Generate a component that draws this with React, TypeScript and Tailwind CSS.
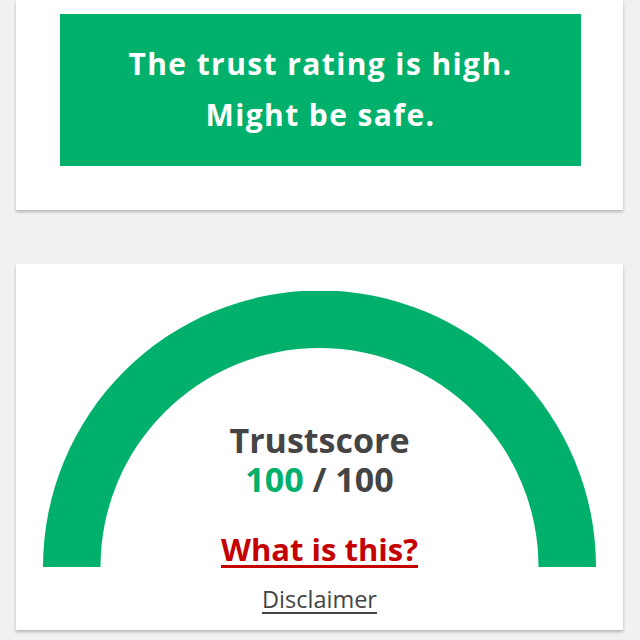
import React from "react";

export default function App() {
  return (
    <div className="min-h-[640px] w-[640px] bg-[#f1f1f1] overflow-hidden px-[16px] pr-[17px]" style={{ fontFamily: '"Open Sans", sans-serif' }}>
      <div className="bg-white shadow-[0_2px_3px_rgba(0,0,0,0.25)] pl-[44px] pr-[42px] pt-[14px] pb-[44px]">
        <div className="bg-[#00b06b] h-[152px] flex flex-col items-center justify-center text-white font-bold text-[30px] leading-[51px] tracking-[1.4px] pb-[2px]" style={{ fontFamily: '"Open Sans", sans-serif' }}>
          <div>The trust rating is high.</div>
          <div>Might be safe.</div>
        </div>
      </div>

      <div className="mt-[54px] bg-white shadow-[0_2px_3px_rgba(0,0,0,0.25)] pt-[27px] h-[366px] flex flex-col items-center">
        <div className="relative w-[553px] h-[276px]">
          <svg className="absolute inset-0" width="553" height="276" viewBox="0 0 553 276">
            <path d="M 0 276 A 276.5 276.5 0 0 1 553 276 L 495.5 276 A 219 219 0 0 0 57.5 276 Z" fill="#00b06b" />
          </svg>
          <div className="relative flex flex-col items-center pt-[130px]">
            <div className="text-[34px] font-bold leading-[39px] text-[#444444]">Trustscore</div>
            <div className="text-[34px] font-bold leading-[39px] text-[#444444]">
              <span className="text-[#00b06b]">100</span> / 100
            </div>
            <div className="mt-[31px] text-[31px] font-bold leading-[38px] text-[#c40000] underline decoration-[3px] underline-offset-[4px]">What is this?</div>
          </div>
        </div>
        <div className="mt-[17px] text-[23.5px] leading-[30px] text-[#444444] underline decoration-[2px] underline-offset-[4px]">Disclaimer</div>
      </div>
    </div>
  );
}
